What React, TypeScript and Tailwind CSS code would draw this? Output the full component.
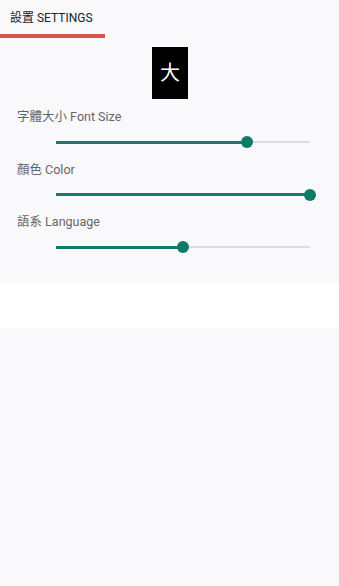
const FONT = '"Roboto", "Noto Sans CJK TC", sans-serif';

type SliderProps = { value: number };

function Slider({ value }: SliderProps) {
  return (
    <div className="relative ml-[56px] mr-[29px] h-[12px] flex items-center">
      <div className="w-full h-[2px] bg-[#dcdcdc]" />
      <div
        className="absolute left-0 h-[3px] bg-[#147a6c]"
        style={{ width: `${value}%` }}
      />
      <div
        className="absolute w-[12px] h-[12px] -ml-[6px] rounded-full bg-[#0f7a68]"
        style={{ left: `${value}%` }}
      />
    </div>
  );
}

const settings = [
  { label: "字體大小 Font Size", value: 75 },
  { label: "顏色 Color", value: 100 },
  { label: "語系 Language", value: 50 },
];

export default function App() {
  return (
    <div
      className="w-[339px] h-[586px] bg-[#f9f8fb] flex flex-col"
      style={{ fontFamily: FONT }}
    >
      <div className="h-[34px] pl-[10px] pt-[9px] text-[12px] text-[#222]">
        設置 SETTINGS
      </div>
      <div className="w-[105px] h-[4px] bg-[#d9554b]" />
      <div className="flex justify-center pl-[1px] pt-[9px]">
        <div className="w-[36px] h-[52px] bg-black text-white text-[20px] flex items-center justify-center">
          大
        </div>
      </div>
      <div className="flex flex-col pt-[10px]">
        {settings.map((s) => (
          <div key={s.label} className="flex flex-col h-[52.5px]">
            <div className="pl-[17px] text-[12.5px] text-[#666] leading-[16px]">
              {s.label}
            </div>
            <div className="pt-[11px]">
              <Slider value={s.value} />
            </div>
          </div>
        ))}
      </div>
      <div className="mt-[16px] h-[45px] bg-white" />
    </div>
  );
}
